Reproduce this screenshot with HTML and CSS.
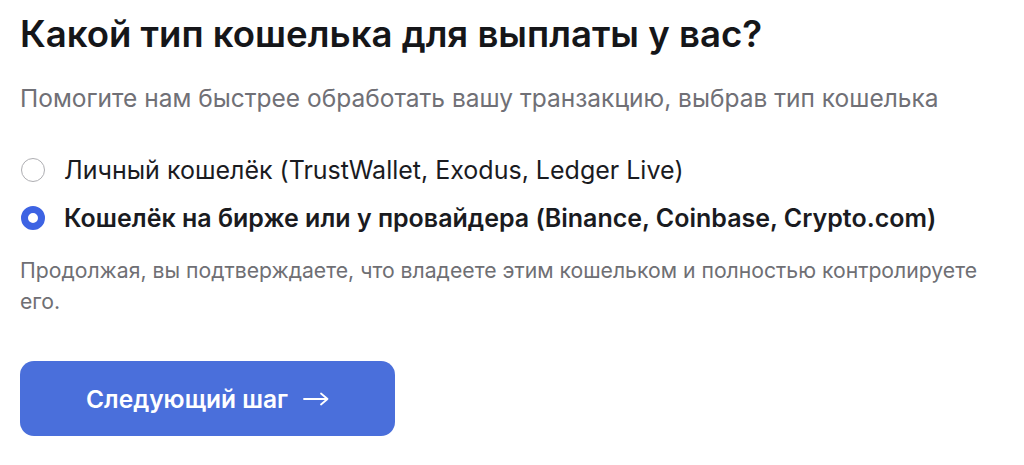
FILE: index.html
```html
<!DOCTYPE html>
<html lang="ru">
<head>
<meta charset="utf-8">
<link rel="stylesheet" href="styles.css">
</head>
<body>
<main class="form">
  <h1 class="title">Какой тип кошелька для выплаты у вас?</h1>
  <p class="subtitle">Помогите нам быстрее обработать вашу транзакцию, выбрав тип кошелька</p>
  <div class="options">
    <label class="option">
      <span class="radio"></span>
      <span class="option-text">Личный кошелёк (TrustWallet, Exodus, Ledger Live)</span>
    </label>
    <label class="option option-selected">
      <span class="radio radio-checked"></span>
      <span class="option-text">Кошелёк на бирже или у провайдера (Binance, Coinbase, Crypto.com)</span>
    </label>
  </div>
  <p class="note">Продолжая, вы подтверждаете, что владеете этим кошельком и полностью контролируете его.</p>
  <button class="next" type="button">
    <span class="next-label">Следующий шаг</span>
    <svg class="arrow" width="26" height="14" viewBox="0 0 26 14" aria-hidden="true">
      <path d="M1 7H24M18 1.5L24.5 7L18 12.5" fill="none" stroke="#ffffff" stroke-width="1.8" stroke-linecap="round" stroke-linejoin="round"/>
    </svg>
  </button>
</main>
</body>
</html>
```
FILE: styles.css
```css
html, body {
  margin: 0;
  padding: 0;
  background: #ffffff;
}
body {
  font-family: Inter, "Noto Sans", sans-serif;
  color: #17181c;
}
.form {
  padding: 12px 20px 0 20px;
  width: 984px;
}
.title {
  margin: 0;
  font-size: 36.6px;
  font-weight: 600;
  line-height: 44px;
  color: #151619;
}
.subtitle {
  margin: 26px 0 0 0;
  font-size: 24.5px;
  line-height: 32px;
  color: #707076;
}
.options {
  margin-top: 39px;
  display: flex;
  flex-direction: column;
  gap: 14px;
}
.option {
  display: flex;
  align-items: center;
  gap: 19px;
  font-size: 25px;
  line-height: 34px;
  color: #1a1b1f;
}
.option-selected {
  font-weight: 600;
}
.radio {
  flex: none;
  width: 24px;
  height: 24px;
  margin-left: 1px;
  border: 1.5px solid #aeaeb2;
  border-radius: 50%;
  box-sizing: border-box;
}
.radio-checked {
  border: 7.5px solid #3d63e3;
  background: #ffffff;
}
.note {
  margin: 20px 0 0 0;
  font-size: 21.2px;
  line-height: 31px;
  color: #6f6f74;
}
.next {
  margin-top: 44px;
  width: 375px;
  height: 75px;
  padding: 0;
  border: none;
  border-radius: 14px;
  background: #4a6fdb;
  color: #ffffff;
  font-family: Inter, "Noto Sans", sans-serif;
  font-size: 24.5px;
  font-weight: 600;
  display: flex;
  align-items: center;
  justify-content: center;
  gap: 15px;
}
.arrow {
  flex: none;
  margin-top: 1px;
}
```
